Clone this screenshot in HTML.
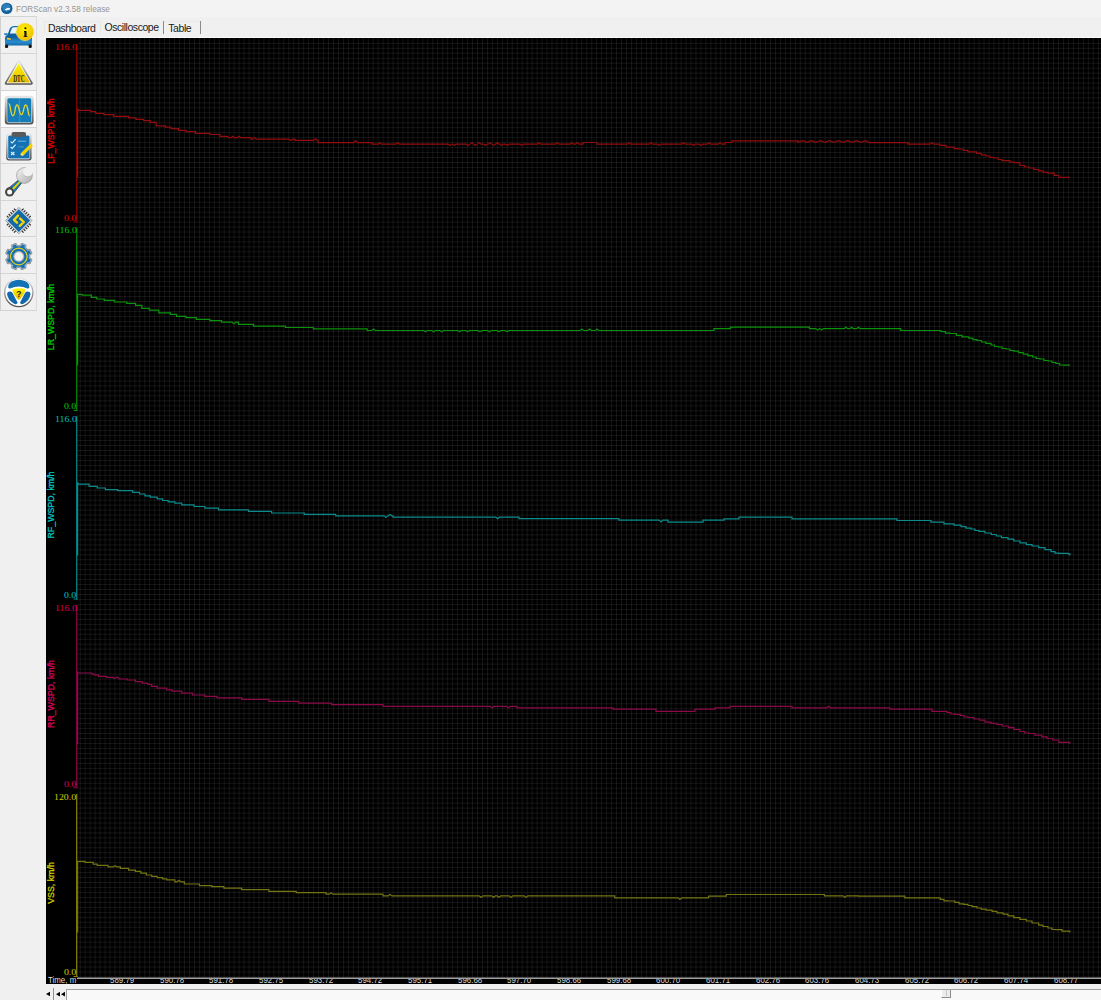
<!DOCTYPE html>
<html><head><meta charset="utf-8">
<style>
*{margin:0;padding:0;box-sizing:border-box}
html,body{width:1101px;height:1000px;overflow:hidden;background:#f0f0f0;font-family:"Liberation Sans",sans-serif;position:relative}
.title{position:absolute;left:0;top:0;width:1101px;height:17px;background:#f3f3f3}
.title .t{position:absolute;left:15.8px;top:3.3px;font-size:9.4px;color:#959595;white-space:nowrap;transform:scaleX(0.87);transform-origin:left top}
.tb{position:absolute;left:1px;width:36px;height:37px;background:#f0f0f0;border-right:1px solid #dcdcdc;border-bottom:1px solid #d4d4d4}
.tb.sel{background:#fcfcfc}
.tb svg{position:absolute;left:-1px;top:0}
.tab{position:absolute;top:21px;height:14px;font-size:10.5px;letter-spacing:-0.45px;color:#1a1a1a;white-space:nowrap;line-height:14px}
.sep{position:absolute;top:20.7px;width:1px;height:13px;background:#8a8a8a}
.plot{position:absolute;left:46px;top:38px;width:1055px;height:946px;background:#000}
.ylab{position:absolute;right:1024.4px;font-family:"Liberation Serif",serif;font-size:9px;line-height:9px;white-space:nowrap;transform:scaleX(1.1);transform-origin:right center}
.chname{position:absolute;left:50.8px;width:0;height:0;font-size:8.8px;line-height:9px;white-space:nowrap;-webkit-text-stroke:0.3px currentColor}
.chname span{position:absolute;left:0;top:0;transform:translate(-50%,-50%) rotate(-90deg)}
.xlab{position:absolute;top:978.6px;height:5.2px;overflow:hidden;font-size:9.2px;line-height:9px;color:#d8d8d8;white-space:nowrap}
.xlab span{display:inline-block;position:relative;top:-3px;transform:scaleX(0.86);transform-origin:left top}
</style></head><body>
<div class="title">
<svg width="14" height="16" style="position:absolute;left:0;top:0">
<circle cx="6.8" cy="8.4" r="5.7" fill="#0f5f98"/>
<circle cx="6.4" cy="7.6" r="4.2" fill="#2a7fb8"/>
<path d="M4.6 9.8 L6.4 8.6 L7.2 7.9 Q8.6 7.6 10 8.2 L10.2 9.4 L7.6 10 L6.2 10.6 Z" fill="#f4f8fb"/>
</svg>
<div class="t">FORScan v2.3.58 release</div>
</div>
<div style="position:absolute;left:0;top:17px;width:1px;height:294px;background:#d0d0d0"></div>
<svg width="0" height="0" style="position:absolute"><defs>
<linearGradient id="gy" x1="0" y1="0" x2="0" y2="1"><stop offset="0" stop-color="#fff700"/><stop offset="1" stop-color="#e8b800"/></linearGradient>
<linearGradient id="gbz" x1="0" y1="0" x2="0" y2="1"><stop offset="0" stop-color="#e8e8e8"/><stop offset="1" stop-color="#505050"/></linearGradient>
<linearGradient id="gbl" x1="0" y1="0" x2="0" y2="1"><stop offset="0" stop-color="#1a78b8"/><stop offset="1" stop-color="#0f5f9c"/></linearGradient>
<radialGradient id="gyb" cx="0.45" cy="0.35" r="0.7"><stop offset="0" stop-color="#fff200"/><stop offset="1" stop-color="#f0b800"/></radialGradient>
<linearGradient id="gcar" x1="0" y1="0" x2="0" y2="1"><stop offset="0" stop-color="#1670b0"/><stop offset="0.55" stop-color="#0e5c9c"/><stop offset="0.8" stop-color="#2a8ccc"/><stop offset="1" stop-color="#136cae"/></linearGradient>
<linearGradient id="gmet" x1="0" y1="0" x2="1" y2="1"><stop offset="0" stop-color="#f4f4f4"/><stop offset="1" stop-color="#b0b0b0"/></linearGradient>
</defs></svg>
<div style="position:absolute;left:0;top:16.4px;width:37px;height:1.2px;background:#d4d4d4"></div>
<div class="tb" style="top:17px;height:36.6px"><svg width="37" height="37" viewBox="0 0 37 37">
<path d="M5 21.2 Q5 18.6 7.6 17.8 L9.8 11.6 Q10.8 9.2 13.8 9 L23 9 Q26 9.2 27.2 11.6 L29.4 17.8 Q32 18.6 32 21.2 L32 26.8 Q32 28.6 30 28.6 L7 28.6 Q5 28.6 5 26.8 Z" fill="url(#gcar)"/>
<path d="M9.9 16.6 L11.8 11.6 Q12.4 10.3 14 10.3 L22 10.3 L22 16.6 Z" fill="#eaf5fb"/>
<path d="M4 16.6 Q4.6 16 7.6 16.2 L8 17.6 L5 18.2 Q4 17.8 4 16.6 Z" fill="#1a75b5"/>
<path d="M6.8 20.6 L10.4 21.2 L11 23 L7 22.6 Z" fill="#f2c020"/>
<rect x="5" y="27.6" width="3.2" height="3.4" rx="1.3" fill="#151515"/>
<rect x="28.6" y="27.6" width="3.2" height="3.4" rx="1.3" fill="#151515"/>
<circle cx="25" cy="14.8" r="8.9" fill="url(#gyb)" stroke="#f6e690" stroke-width="0.5"/>
<circle cx="25.4" cy="11.3" r="1.05" fill="#111"/>
<path d="M24 14 L26.5 14 L26.5 19.2 L27.3 19.2 L27.3 20.1 L23.6 20.1 L23.6 19.2 L24.4 19.2 L24.4 15 L24 15 Z" fill="#111"/>
</svg></div>
<div class="tb" style="top:53.6px;height:37.0px"><svg width="37" height="37" viewBox="0 0 37 37">
<path d="M18.8 6.4 Q19.6 6.4 20.2 7.4 L32.6 28.6 Q33.4 30.6 31.6 30.8 L6 30.8 Q4.2 30.6 5 28.6 L17.4 7.4 Q18 6.4 18.8 6.4 Z" fill="url(#gbz)"/>
<path d="M18.8 8 L31.2 29.2 L6.4 29.2 Z" fill="#fff"/>
<path d="M18.8 9.4 L30 28.6 L7.6 28.6 Z" fill="url(#gy)"/>
<text x="18.9" y="27.8" font-family="Liberation Serif" font-size="11" font-weight="bold" fill="#2c2814" text-anchor="middle" textLength="11.4" lengthAdjust="spacingAndGlyphs">DTC</text>
</svg></div>
<div class="tb sel" style="top:90.6px;height:37.0px"><svg width="37" height="37" viewBox="0 0 37 37">
<rect x="4.8" y="4.8" width="28.8" height="28.8" rx="3" fill="url(#gbz)"/>
<rect x="6.8" y="6.7" width="25" height="25" rx="2" fill="#e8f4fa"/>
<rect x="7.3" y="7.2" width="24" height="24" rx="1.5" fill="#167cb8"/>
<line x1="19.6" y1="7.2" x2="19.6" y2="31.2" stroke="#5cb070" stroke-width="0.6"/>
<path d="M8.6 12.6 C10.6 12.2 10.4 24.8 13 24.8 C15.4 24.8 14.6 14 17 14 C19.4 14 19 23.6 21.4 23.6 C23.8 23.6 23.4 14 25.8 14 C28.2 14 27.8 24.8 29.8 24.8" fill="none" stroke="#e8d82a" stroke-width="1.3"/>
</svg></div>
<div class="tb" style="top:127.6px;height:36.7px"><svg width="37" height="37" viewBox="0 0 37 37">
<rect x="6.2" y="5.6" width="25.4" height="26.8" rx="2.6" fill="url(#gbz)"/>
<rect x="7.6" y="6.8" width="22.4" height="24.4" rx="1.6" fill="#fff"/>
<rect x="8.2" y="7.4" width="21.4" height="23.2" rx="1.4" fill="#1472b4"/>
<rect x="11.6" y="4" width="14.4" height="5" rx="1.8" fill="#5a5a5a"/>
<path d="M10.6 13.6 L12.2 15 L15.6 11.2 M10.6 19 L12.2 20.4 L15.6 16.6 M11 24 L14.4 27 M14.4 24 L11 27" stroke="#e8f4fb" stroke-width="1.1" fill="none"/>
<rect x="18" y="12.6" width="8" height="1.4" fill="#5aa0d0"/>
<rect x="18" y="18.2" width="6" height="1.2" fill="#3d8cc4"/>
<path d="M20.4 28.2 L21 25 L30.8 15.6 L33 17.8 L23.4 27.4 Z" fill="#f2d200"/>
<path d="M20.4 28.2 L21 25 L23.4 27.4 Z" fill="#e6e6e6"/>
<path d="M20.4 28.2 L20.7 26.8 L21.8 27.9 Z" fill="#111"/>
</svg></div>
<div class="tb" style="top:164.3px;height:36.5px"><svg width="37" height="37" viewBox="0 0 37 37">
<path d="M19.4 15.2 L22.4 18.2 L12.6 30.4 L7.2 25.2 Z" fill="#1b78b0" stroke="#3e3e3e" stroke-width="0.7"/>
<path d="M20 16.4 L21.2 17.6 L11.2 28.6 L9.6 27 Z" fill="#f0d400"/>
<circle cx="24.4" cy="11.5" r="7.9" fill="url(#gmet)" stroke="#8a8a8a" stroke-width="0.6"/>
<circle cx="27.8" cy="7.8" r="4.9" fill="#f0f0f0"/>
<path d="M23.4 10.6 A4.9 4.9 0 0 0 31.2 11.4" fill="none" stroke="#a8a8a8" stroke-width="0.6"/>
<circle cx="9.6" cy="27.9" r="4.6" fill="#454545"/>
<circle cx="9.6" cy="27.9" r="2.5" fill="#fafafa"/>
</svg></div>
<div class="tb" style="top:200.8px;height:36.7px"><svg width="37" height="37" viewBox="0 0 37 37">
<g stroke="#2e2e2e" stroke-width="1.2"><line x1="9.20" y1="17.20" x2="6.80" y2="14.80"/><line x1="11.00" y1="15.40" x2="8.60" y2="13.00"/><line x1="12.80" y1="13.60" x2="10.40" y2="11.20"/><line x1="14.60" y1="11.80" x2="12.20" y2="9.40"/><line x1="16.40" y1="10.00" x2="14.00" y2="7.60"/><line x1="21.20" y1="10.00" x2="23.60" y2="7.60"/><line x1="23.00" y1="11.80" x2="25.40" y2="9.40"/><line x1="24.80" y1="13.60" x2="27.20" y2="11.20"/><line x1="26.60" y1="15.40" x2="29.00" y2="13.00"/><line x1="28.40" y1="17.20" x2="30.80" y2="14.80"/><line x1="28.40" y1="22.00" x2="30.80" y2="24.40"/><line x1="26.60" y1="23.80" x2="29.00" y2="26.20"/><line x1="24.80" y1="25.60" x2="27.20" y2="28.00"/><line x1="23.00" y1="27.40" x2="25.40" y2="29.80"/><line x1="21.20" y1="29.20" x2="23.60" y2="31.60"/><line x1="16.40" y1="29.20" x2="14.00" y2="31.60"/><line x1="14.60" y1="27.40" x2="12.20" y2="29.80"/><line x1="12.80" y1="25.60" x2="10.40" y2="28.00"/><line x1="11.00" y1="23.80" x2="8.60" y2="26.20"/><line x1="9.20" y1="22.00" x2="6.80" y2="24.40"/></g>
<path d="M18.8 6.4 L32 19.6 L18.8 32.8 L5.6 19.6 Z" fill="#d8d8d8" stroke="#707070" stroke-width="0.6"/>
<path d="M18.8 7.6 L30.8 19.6 L18.8 31.6 L6.8 19.6 Z" fill="#cfe6f4"/>
<path d="M18.8 8.2 L30.2 19.6 L18.8 31 L7.4 19.6 Z" fill="#1468a8"/>
<path d="M18 14.6 L14 18.8 L17 21.6 M20.2 17.6 L23.8 21 L19.8 24.8" stroke="#f4d800" stroke-width="2.4" fill="none" stroke-linecap="round" stroke-linejoin="round"/>
</svg></div>
<div class="tb" style="top:237.5px;height:36.8px"><svg width="37" height="37" viewBox="0 0 37 37">
<path d="M20.73 8.08 L21.88 6.08 L25.41 7.54 L24.81 9.77 L27.53 12.49 L29.76 11.89 L31.22 15.42 L29.22 16.57 L29.22 20.43 L31.22 21.58 L29.76 25.11 L27.53 24.51 L24.81 27.23 L25.41 29.46 L21.88 30.92 L20.73 28.92 L16.87 28.92 L15.72 30.92 L12.19 29.46 L12.79 27.23 L10.07 24.51 L7.84 25.11 L6.38 21.58 L8.38 20.43 L8.38 16.57 L6.38 15.42 L7.84 11.89 L10.07 12.49 L12.79 9.77 L12.19 7.54 L15.72 6.08 L16.87 8.08 Z" fill="#1a6fb0" stroke="#8c8c8c" stroke-width="2.2" stroke-linejoin="round"/>
<path d="M20.73 8.08 L21.88 6.08 L25.41 7.54 L24.81 9.77 L27.53 12.49 L29.76 11.89 L31.22 15.42 L29.22 16.57 L29.22 20.43 L31.22 21.58 L29.76 25.11 L27.53 24.51 L24.81 27.23 L25.41 29.46 L21.88 30.92 L20.73 28.92 L16.87 28.92 L15.72 30.92 L12.19 29.46 L12.79 27.23 L10.07 24.51 L7.84 25.11 L6.38 21.58 L8.38 20.43 L8.38 16.57 L6.38 15.42 L7.84 11.89 L10.07 12.49 L12.79 9.77 L12.19 7.54 L15.72 6.08 L16.87 8.08 Z" fill="#1a6fb0" stroke="#e8f2fa" stroke-width="0.4"/>
<circle cx="18.8" cy="18.5" r="8.3" fill="none" stroke="#e0d020" stroke-width="1.2"/>
<circle cx="18.8" cy="18.5" r="5.4" fill="#b8b8b8"/>
<circle cx="18.8" cy="18.5" r="4.2" fill="#f4f4f4"/>
</svg></div>
<div class="tb" style="top:274.3px;height:36.7px"><svg width="37" height="37" viewBox="0 0 37 37">
<circle cx="18.8" cy="18.5" r="14.1" fill="#fff" stroke="url(#gbz)" stroke-width="1.3"/>
<path d="M8.2 13.6 Q8 9.6 11.6 7.6 Q18.8 4 26 7.6 Q29.6 9.6 29.4 13.6 Q28.6 14.8 27.4 14.4 Q18.8 10.8 10.2 14.4 Q9 14.8 8.2 13.6 Z" fill="#1472b4"/>
<path d="M7 20 Q7.4 17.6 9.8 17.6 Q11.6 17.6 12.6 19 L17.4 28.2 Q17.6 30.4 15 30.2 Q8 27 7 20 Z" fill="#1268ac"/>
<path d="M30.6 20 Q30.2 17.6 27.8 17.6 Q26 17.6 25 19 L20.2 28.2 Q20 30.4 22.6 30.2 Q29.6 27 30.6 20 Z" fill="#1268ac"/>
<path d="M12.6 15.2 Q18.8 13.4 25 15.2 Q25.6 17.4 23.6 20.6 L20.2 25 Q18.8 26.6 17.4 25 L14 20.6 Q12 17.4 12.6 15.2 Z" fill="url(#gy)"/>
<text x="18.8" y="22.8" font-family="Liberation Sans" font-size="8.5" font-weight="bold" fill="#1a1a1a" text-anchor="middle">?</text>
</svg></div>
<div style="position:absolute;left:43.5px;top:20.5px;width:57px;height:14.5px;border:1px solid #e8e8e8;border-bottom:none;background:#f0f0f0"></div><div style="position:absolute;left:164px;top:20.5px;width:37px;height:14.5px;border-top:1px solid #e8e8e8;background:#f1f1f1"></div><div class="tab" style="left:48px">Dashboard</div>
<div class="tab" style="left:104.5px;top:20.2px">Oscilloscope</div>
<div class="sep" style="left:163px"></div>
<div class="tab" style="left:168.3px">Table</div>
<div class="sep" style="left:200px"></div>
<div style="position:absolute;left:44px;top:37px;width:1057px;height:1px;background:#fafafa"></div>
<div class="plot"></div>
<svg width="1101" height="1000" style="position:absolute;left:0;top:0">
<g fill="#fff" fill-opacity="0.092">
<rect x="79.78" y="38" width="0.85" height="940"/>
<rect x="84.75" y="38" width="0.85" height="940"/>
<rect x="89.71" y="38" width="0.85" height="940"/>
<rect x="94.68" y="38" width="0.85" height="940"/>
<rect x="99.64" y="38" width="0.85" height="940"/>
<rect x="104.61" y="38" width="0.85" height="940"/>
<rect x="109.58" y="38" width="0.85" height="940"/>
<rect x="114.54" y="38" width="0.85" height="940"/>
<rect x="119.51" y="38" width="0.85" height="940"/>
<rect x="124.47" y="38" width="0.85" height="940"/>
<rect x="129.44" y="38" width="0.85" height="940"/>
<rect x="134.41" y="38" width="0.85" height="940"/>
<rect x="139.37" y="38" width="0.85" height="940"/>
<rect x="144.34" y="38" width="0.85" height="940"/>
<rect x="149.30" y="38" width="0.85" height="940"/>
<rect x="154.27" y="38" width="0.85" height="940"/>
<rect x="159.24" y="38" width="0.85" height="940"/>
<rect x="164.20" y="38" width="0.85" height="940"/>
<rect x="169.17" y="38" width="0.85" height="940"/>
<rect x="174.13" y="38" width="0.85" height="940"/>
<rect x="179.10" y="38" width="0.85" height="940"/>
<rect x="184.07" y="38" width="0.85" height="940"/>
<rect x="189.03" y="38" width="0.85" height="940"/>
<rect x="194.00" y="38" width="0.85" height="940"/>
<rect x="198.96" y="38" width="0.85" height="940"/>
<rect x="203.93" y="38" width="0.85" height="940"/>
<rect x="208.90" y="38" width="0.85" height="940"/>
<rect x="213.86" y="38" width="0.85" height="940"/>
<rect x="218.83" y="38" width="0.85" height="940"/>
<rect x="223.79" y="38" width="0.85" height="940"/>
<rect x="228.76" y="38" width="0.85" height="940"/>
<rect x="233.73" y="38" width="0.85" height="940"/>
<rect x="238.69" y="38" width="0.85" height="940"/>
<rect x="243.66" y="38" width="0.85" height="940"/>
<rect x="248.62" y="38" width="0.85" height="940"/>
<rect x="253.59" y="38" width="0.85" height="940"/>
<rect x="258.56" y="38" width="0.85" height="940"/>
<rect x="263.52" y="38" width="0.85" height="940"/>
<rect x="268.49" y="38" width="0.85" height="940"/>
<rect x="273.45" y="38" width="0.85" height="940"/>
<rect x="278.42" y="38" width="0.85" height="940"/>
<rect x="283.39" y="38" width="0.85" height="940"/>
<rect x="288.35" y="38" width="0.85" height="940"/>
<rect x="293.32" y="38" width="0.85" height="940"/>
<rect x="298.28" y="38" width="0.85" height="940"/>
<rect x="303.25" y="38" width="0.85" height="940"/>
<rect x="308.22" y="38" width="0.85" height="940"/>
<rect x="313.18" y="38" width="0.85" height="940"/>
<rect x="318.15" y="38" width="0.85" height="940"/>
<rect x="323.11" y="38" width="0.85" height="940"/>
<rect x="328.08" y="38" width="0.85" height="940"/>
<rect x="333.05" y="38" width="0.85" height="940"/>
<rect x="338.01" y="38" width="0.85" height="940"/>
<rect x="342.98" y="38" width="0.85" height="940"/>
<rect x="347.94" y="38" width="0.85" height="940"/>
<rect x="352.91" y="38" width="0.85" height="940"/>
<rect x="357.88" y="38" width="0.85" height="940"/>
<rect x="362.84" y="38" width="0.85" height="940"/>
<rect x="367.81" y="38" width="0.85" height="940"/>
<rect x="372.77" y="38" width="0.85" height="940"/>
<rect x="377.74" y="38" width="0.85" height="940"/>
<rect x="382.71" y="38" width="0.85" height="940"/>
<rect x="387.67" y="38" width="0.85" height="940"/>
<rect x="392.64" y="38" width="0.85" height="940"/>
<rect x="397.60" y="38" width="0.85" height="940"/>
<rect x="402.57" y="38" width="0.85" height="940"/>
<rect x="407.54" y="38" width="0.85" height="940"/>
<rect x="412.50" y="38" width="0.85" height="940"/>
<rect x="417.47" y="38" width="0.85" height="940"/>
<rect x="422.43" y="38" width="0.85" height="940"/>
<rect x="427.40" y="38" width="0.85" height="940"/>
<rect x="432.37" y="38" width="0.85" height="940"/>
<rect x="437.33" y="38" width="0.85" height="940"/>
<rect x="442.30" y="38" width="0.85" height="940"/>
<rect x="447.26" y="38" width="0.85" height="940"/>
<rect x="452.23" y="38" width="0.85" height="940"/>
<rect x="457.20" y="38" width="0.85" height="940"/>
<rect x="462.16" y="38" width="0.85" height="940"/>
<rect x="467.13" y="38" width="0.85" height="940"/>
<rect x="472.09" y="38" width="0.85" height="940"/>
<rect x="477.06" y="38" width="0.85" height="940"/>
<rect x="482.03" y="38" width="0.85" height="940"/>
<rect x="486.99" y="38" width="0.85" height="940"/>
<rect x="491.96" y="38" width="0.85" height="940"/>
<rect x="496.92" y="38" width="0.85" height="940"/>
<rect x="501.89" y="38" width="0.85" height="940"/>
<rect x="506.86" y="38" width="0.85" height="940"/>
<rect x="511.82" y="38" width="0.85" height="940"/>
<rect x="516.79" y="38" width="0.85" height="940"/>
<rect x="521.75" y="38" width="0.85" height="940"/>
<rect x="526.72" y="38" width="0.85" height="940"/>
<rect x="531.69" y="38" width="0.85" height="940"/>
<rect x="536.65" y="38" width="0.85" height="940"/>
<rect x="541.62" y="38" width="0.85" height="940"/>
<rect x="546.58" y="38" width="0.85" height="940"/>
<rect x="551.55" y="38" width="0.85" height="940"/>
<rect x="556.52" y="38" width="0.85" height="940"/>
<rect x="561.48" y="38" width="0.85" height="940"/>
<rect x="566.45" y="38" width="0.85" height="940"/>
<rect x="571.41" y="38" width="0.85" height="940"/>
<rect x="576.38" y="38" width="0.85" height="940"/>
<rect x="581.35" y="38" width="0.85" height="940"/>
<rect x="586.31" y="38" width="0.85" height="940"/>
<rect x="591.28" y="38" width="0.85" height="940"/>
<rect x="596.24" y="38" width="0.85" height="940"/>
<rect x="601.21" y="38" width="0.85" height="940"/>
<rect x="606.18" y="38" width="0.85" height="940"/>
<rect x="611.14" y="38" width="0.85" height="940"/>
<rect x="616.11" y="38" width="0.85" height="940"/>
<rect x="621.07" y="38" width="0.85" height="940"/>
<rect x="626.04" y="38" width="0.85" height="940"/>
<rect x="631.01" y="38" width="0.85" height="940"/>
<rect x="635.97" y="38" width="0.85" height="940"/>
<rect x="640.94" y="38" width="0.85" height="940"/>
<rect x="645.90" y="38" width="0.85" height="940"/>
<rect x="650.87" y="38" width="0.85" height="940"/>
<rect x="655.84" y="38" width="0.85" height="940"/>
<rect x="660.80" y="38" width="0.85" height="940"/>
<rect x="665.77" y="38" width="0.85" height="940"/>
<rect x="670.73" y="38" width="0.85" height="940"/>
<rect x="675.70" y="38" width="0.85" height="940"/>
<rect x="680.67" y="38" width="0.85" height="940"/>
<rect x="685.63" y="38" width="0.85" height="940"/>
<rect x="690.60" y="38" width="0.85" height="940"/>
<rect x="695.56" y="38" width="0.85" height="940"/>
<rect x="700.53" y="38" width="0.85" height="940"/>
<rect x="705.50" y="38" width="0.85" height="940"/>
<rect x="710.46" y="38" width="0.85" height="940"/>
<rect x="715.43" y="38" width="0.85" height="940"/>
<rect x="720.39" y="38" width="0.85" height="940"/>
<rect x="725.36" y="38" width="0.85" height="940"/>
<rect x="730.33" y="38" width="0.85" height="940"/>
<rect x="735.29" y="38" width="0.85" height="940"/>
<rect x="740.26" y="38" width="0.85" height="940"/>
<rect x="745.22" y="38" width="0.85" height="940"/>
<rect x="750.19" y="38" width="0.85" height="940"/>
<rect x="755.16" y="38" width="0.85" height="940"/>
<rect x="760.12" y="38" width="0.85" height="940"/>
<rect x="765.09" y="38" width="0.85" height="940"/>
<rect x="770.05" y="38" width="0.85" height="940"/>
<rect x="775.02" y="38" width="0.85" height="940"/>
<rect x="779.99" y="38" width="0.85" height="940"/>
<rect x="784.95" y="38" width="0.85" height="940"/>
<rect x="789.92" y="38" width="0.85" height="940"/>
<rect x="794.88" y="38" width="0.85" height="940"/>
<rect x="799.85" y="38" width="0.85" height="940"/>
<rect x="804.82" y="38" width="0.85" height="940"/>
<rect x="809.78" y="38" width="0.85" height="940"/>
<rect x="814.75" y="38" width="0.85" height="940"/>
<rect x="819.71" y="38" width="0.85" height="940"/>
<rect x="824.68" y="38" width="0.85" height="940"/>
<rect x="829.65" y="38" width="0.85" height="940"/>
<rect x="834.61" y="38" width="0.85" height="940"/>
<rect x="839.58" y="38" width="0.85" height="940"/>
<rect x="844.54" y="38" width="0.85" height="940"/>
<rect x="849.51" y="38" width="0.85" height="940"/>
<rect x="854.48" y="38" width="0.85" height="940"/>
<rect x="859.44" y="38" width="0.85" height="940"/>
<rect x="864.41" y="38" width="0.85" height="940"/>
<rect x="869.37" y="38" width="0.85" height="940"/>
<rect x="874.34" y="38" width="0.85" height="940"/>
<rect x="879.31" y="38" width="0.85" height="940"/>
<rect x="884.27" y="38" width="0.85" height="940"/>
<rect x="889.24" y="38" width="0.85" height="940"/>
<rect x="894.20" y="38" width="0.85" height="940"/>
<rect x="899.17" y="38" width="0.85" height="940"/>
<rect x="904.14" y="38" width="0.85" height="940"/>
<rect x="909.10" y="38" width="0.85" height="940"/>
<rect x="914.07" y="38" width="0.85" height="940"/>
<rect x="919.03" y="38" width="0.85" height="940"/>
<rect x="924.00" y="38" width="0.85" height="940"/>
<rect x="928.97" y="38" width="0.85" height="940"/>
<rect x="933.93" y="38" width="0.85" height="940"/>
<rect x="938.90" y="38" width="0.85" height="940"/>
<rect x="943.86" y="38" width="0.85" height="940"/>
<rect x="948.83" y="38" width="0.85" height="940"/>
<rect x="953.80" y="38" width="0.85" height="940"/>
<rect x="958.76" y="38" width="0.85" height="940"/>
<rect x="963.73" y="38" width="0.85" height="940"/>
<rect x="968.69" y="38" width="0.85" height="940"/>
<rect x="973.66" y="38" width="0.85" height="940"/>
<rect x="978.63" y="38" width="0.85" height="940"/>
<rect x="983.59" y="38" width="0.85" height="940"/>
<rect x="988.56" y="38" width="0.85" height="940"/>
<rect x="993.52" y="38" width="0.85" height="940"/>
<rect x="998.49" y="38" width="0.85" height="940"/>
<rect x="1003.46" y="38" width="0.85" height="940"/>
<rect x="1008.42" y="38" width="0.85" height="940"/>
<rect x="1013.39" y="38" width="0.85" height="940"/>
<rect x="1018.35" y="38" width="0.85" height="940"/>
<rect x="1023.32" y="38" width="0.85" height="940"/>
<rect x="1028.29" y="38" width="0.85" height="940"/>
<rect x="1033.25" y="38" width="0.85" height="940"/>
<rect x="1038.22" y="38" width="0.85" height="940"/>
<rect x="1043.18" y="38" width="0.85" height="940"/>
<rect x="1048.15" y="38" width="0.85" height="940"/>
<rect x="1053.12" y="38" width="0.85" height="940"/>
<rect x="1058.08" y="38" width="0.85" height="940"/>
<rect x="1063.05" y="38" width="0.85" height="940"/>
<rect x="1068.01" y="38" width="0.85" height="940"/>
<rect x="1072.98" y="38" width="0.85" height="940"/>
<rect x="1077.95" y="38" width="0.85" height="940"/>
<rect x="1082.91" y="38" width="0.85" height="940"/>
<rect x="1087.88" y="38" width="0.85" height="940"/>
<rect x="1092.84" y="38" width="0.85" height="940"/>
<rect x="1097.81" y="38" width="0.85" height="940"/>
<rect x="77" y="42.88" width="1030" height="0.85"/>
<rect x="77" y="47.85" width="1030" height="0.85"/>
<rect x="77" y="52.81" width="1030" height="0.85"/>
<rect x="77" y="57.78" width="1030" height="0.85"/>
<rect x="77" y="62.74" width="1030" height="0.85"/>
<rect x="77" y="67.71" width="1030" height="0.85"/>
<rect x="77" y="72.68" width="1030" height="0.85"/>
<rect x="77" y="77.64" width="1030" height="0.85"/>
<rect x="77" y="82.61" width="1030" height="0.85"/>
<rect x="77" y="87.57" width="1030" height="0.85"/>
<rect x="77" y="92.54" width="1030" height="0.85"/>
<rect x="77" y="97.51" width="1030" height="0.85"/>
<rect x="77" y="102.47" width="1030" height="0.85"/>
<rect x="77" y="107.44" width="1030" height="0.85"/>
<rect x="77" y="112.40" width="1030" height="0.85"/>
<rect x="77" y="117.37" width="1030" height="0.85"/>
<rect x="77" y="122.34" width="1030" height="0.85"/>
<rect x="77" y="127.30" width="1030" height="0.85"/>
<rect x="77" y="132.27" width="1030" height="0.85"/>
<rect x="77" y="137.23" width="1030" height="0.85"/>
<rect x="77" y="142.20" width="1030" height="0.85"/>
<rect x="77" y="147.17" width="1030" height="0.85"/>
<rect x="77" y="152.13" width="1030" height="0.85"/>
<rect x="77" y="157.10" width="1030" height="0.85"/>
<rect x="77" y="162.06" width="1030" height="0.85"/>
<rect x="77" y="167.03" width="1030" height="0.85"/>
<rect x="77" y="172.00" width="1030" height="0.85"/>
<rect x="77" y="176.96" width="1030" height="0.85"/>
<rect x="77" y="181.93" width="1030" height="0.85"/>
<rect x="77" y="186.89" width="1030" height="0.85"/>
<rect x="77" y="191.86" width="1030" height="0.85"/>
<rect x="77" y="196.83" width="1030" height="0.85"/>
<rect x="77" y="201.79" width="1030" height="0.85"/>
<rect x="77" y="206.76" width="1030" height="0.85"/>
<rect x="77" y="211.72" width="1030" height="0.85"/>
<rect x="77" y="216.69" width="1030" height="0.85"/>
<rect x="77" y="221.66" width="1030" height="0.85"/>
<rect x="77" y="226.62" width="1030" height="0.85"/>
<rect x="77" y="231.59" width="1030" height="0.85"/>
<rect x="77" y="236.55" width="1030" height="0.85"/>
<rect x="77" y="241.52" width="1030" height="0.85"/>
<rect x="77" y="246.49" width="1030" height="0.85"/>
<rect x="77" y="251.45" width="1030" height="0.85"/>
<rect x="77" y="256.42" width="1030" height="0.85"/>
<rect x="77" y="261.38" width="1030" height="0.85"/>
<rect x="77" y="266.35" width="1030" height="0.85"/>
<rect x="77" y="271.32" width="1030" height="0.85"/>
<rect x="77" y="276.28" width="1030" height="0.85"/>
<rect x="77" y="281.25" width="1030" height="0.85"/>
<rect x="77" y="286.21" width="1030" height="0.85"/>
<rect x="77" y="291.18" width="1030" height="0.85"/>
<rect x="77" y="296.15" width="1030" height="0.85"/>
<rect x="77" y="301.11" width="1030" height="0.85"/>
<rect x="77" y="306.08" width="1030" height="0.85"/>
<rect x="77" y="311.04" width="1030" height="0.85"/>
<rect x="77" y="316.01" width="1030" height="0.85"/>
<rect x="77" y="320.98" width="1030" height="0.85"/>
<rect x="77" y="325.94" width="1030" height="0.85"/>
<rect x="77" y="330.91" width="1030" height="0.85"/>
<rect x="77" y="335.87" width="1030" height="0.85"/>
<rect x="77" y="340.84" width="1030" height="0.85"/>
<rect x="77" y="345.81" width="1030" height="0.85"/>
<rect x="77" y="350.77" width="1030" height="0.85"/>
<rect x="77" y="355.74" width="1030" height="0.85"/>
<rect x="77" y="360.70" width="1030" height="0.85"/>
<rect x="77" y="365.67" width="1030" height="0.85"/>
<rect x="77" y="370.64" width="1030" height="0.85"/>
<rect x="77" y="375.60" width="1030" height="0.85"/>
<rect x="77" y="380.57" width="1030" height="0.85"/>
<rect x="77" y="385.53" width="1030" height="0.85"/>
<rect x="77" y="390.50" width="1030" height="0.85"/>
<rect x="77" y="395.47" width="1030" height="0.85"/>
<rect x="77" y="400.43" width="1030" height="0.85"/>
<rect x="77" y="405.40" width="1030" height="0.85"/>
<rect x="77" y="410.36" width="1030" height="0.85"/>
<rect x="77" y="415.33" width="1030" height="0.85"/>
<rect x="77" y="420.30" width="1030" height="0.85"/>
<rect x="77" y="425.26" width="1030" height="0.85"/>
<rect x="77" y="430.23" width="1030" height="0.85"/>
<rect x="77" y="435.19" width="1030" height="0.85"/>
<rect x="77" y="440.16" width="1030" height="0.85"/>
<rect x="77" y="445.13" width="1030" height="0.85"/>
<rect x="77" y="450.09" width="1030" height="0.85"/>
<rect x="77" y="455.06" width="1030" height="0.85"/>
<rect x="77" y="460.02" width="1030" height="0.85"/>
<rect x="77" y="464.99" width="1030" height="0.85"/>
<rect x="77" y="469.96" width="1030" height="0.85"/>
<rect x="77" y="474.92" width="1030" height="0.85"/>
<rect x="77" y="479.89" width="1030" height="0.85"/>
<rect x="77" y="484.85" width="1030" height="0.85"/>
<rect x="77" y="489.82" width="1030" height="0.85"/>
<rect x="77" y="494.79" width="1030" height="0.85"/>
<rect x="77" y="499.75" width="1030" height="0.85"/>
<rect x="77" y="504.72" width="1030" height="0.85"/>
<rect x="77" y="509.68" width="1030" height="0.85"/>
<rect x="77" y="514.65" width="1030" height="0.85"/>
<rect x="77" y="519.62" width="1030" height="0.85"/>
<rect x="77" y="524.58" width="1030" height="0.85"/>
<rect x="77" y="529.55" width="1030" height="0.85"/>
<rect x="77" y="534.51" width="1030" height="0.85"/>
<rect x="77" y="539.48" width="1030" height="0.85"/>
<rect x="77" y="544.45" width="1030" height="0.85"/>
<rect x="77" y="549.41" width="1030" height="0.85"/>
<rect x="77" y="554.38" width="1030" height="0.85"/>
<rect x="77" y="559.34" width="1030" height="0.85"/>
<rect x="77" y="564.31" width="1030" height="0.85"/>
<rect x="77" y="569.28" width="1030" height="0.85"/>
<rect x="77" y="574.24" width="1030" height="0.85"/>
<rect x="77" y="579.21" width="1030" height="0.85"/>
<rect x="77" y="584.17" width="1030" height="0.85"/>
<rect x="77" y="589.14" width="1030" height="0.85"/>
<rect x="77" y="594.11" width="1030" height="0.85"/>
<rect x="77" y="599.07" width="1030" height="0.85"/>
<rect x="77" y="604.04" width="1030" height="0.85"/>
<rect x="77" y="609.00" width="1030" height="0.85"/>
<rect x="77" y="613.97" width="1030" height="0.85"/>
<rect x="77" y="618.94" width="1030" height="0.85"/>
<rect x="77" y="623.90" width="1030" height="0.85"/>
<rect x="77" y="628.87" width="1030" height="0.85"/>
<rect x="77" y="633.83" width="1030" height="0.85"/>
<rect x="77" y="638.80" width="1030" height="0.85"/>
<rect x="77" y="643.77" width="1030" height="0.85"/>
<rect x="77" y="648.73" width="1030" height="0.85"/>
<rect x="77" y="653.70" width="1030" height="0.85"/>
<rect x="77" y="658.66" width="1030" height="0.85"/>
<rect x="77" y="663.63" width="1030" height="0.85"/>
<rect x="77" y="668.60" width="1030" height="0.85"/>
<rect x="77" y="673.56" width="1030" height="0.85"/>
<rect x="77" y="678.53" width="1030" height="0.85"/>
<rect x="77" y="683.49" width="1030" height="0.85"/>
<rect x="77" y="688.46" width="1030" height="0.85"/>
<rect x="77" y="693.43" width="1030" height="0.85"/>
<rect x="77" y="698.39" width="1030" height="0.85"/>
<rect x="77" y="703.36" width="1030" height="0.85"/>
<rect x="77" y="708.32" width="1030" height="0.85"/>
<rect x="77" y="713.29" width="1030" height="0.85"/>
<rect x="77" y="718.26" width="1030" height="0.85"/>
<rect x="77" y="723.22" width="1030" height="0.85"/>
<rect x="77" y="728.19" width="1030" height="0.85"/>
<rect x="77" y="733.15" width="1030" height="0.85"/>
<rect x="77" y="738.12" width="1030" height="0.85"/>
<rect x="77" y="743.09" width="1030" height="0.85"/>
<rect x="77" y="748.05" width="1030" height="0.85"/>
<rect x="77" y="753.02" width="1030" height="0.85"/>
<rect x="77" y="757.98" width="1030" height="0.85"/>
<rect x="77" y="762.95" width="1030" height="0.85"/>
<rect x="77" y="767.92" width="1030" height="0.85"/>
<rect x="77" y="772.88" width="1030" height="0.85"/>
<rect x="77" y="777.85" width="1030" height="0.85"/>
<rect x="77" y="782.81" width="1030" height="0.85"/>
<rect x="77" y="787.78" width="1030" height="0.85"/>
<rect x="77" y="792.75" width="1030" height="0.85"/>
<rect x="77" y="797.71" width="1030" height="0.85"/>
<rect x="77" y="802.68" width="1030" height="0.85"/>
<rect x="77" y="807.64" width="1030" height="0.85"/>
<rect x="77" y="812.61" width="1030" height="0.85"/>
<rect x="77" y="817.58" width="1030" height="0.85"/>
<rect x="77" y="822.54" width="1030" height="0.85"/>
<rect x="77" y="827.51" width="1030" height="0.85"/>
<rect x="77" y="832.47" width="1030" height="0.85"/>
<rect x="77" y="837.44" width="1030" height="0.85"/>
<rect x="77" y="842.41" width="1030" height="0.85"/>
<rect x="77" y="847.37" width="1030" height="0.85"/>
<rect x="77" y="852.34" width="1030" height="0.85"/>
<rect x="77" y="857.30" width="1030" height="0.85"/>
<rect x="77" y="862.27" width="1030" height="0.85"/>
<rect x="77" y="867.24" width="1030" height="0.85"/>
<rect x="77" y="872.20" width="1030" height="0.85"/>
<rect x="77" y="877.17" width="1030" height="0.85"/>
<rect x="77" y="882.13" width="1030" height="0.85"/>
<rect x="77" y="887.10" width="1030" height="0.85"/>
<rect x="77" y="892.07" width="1030" height="0.85"/>
<rect x="77" y="897.03" width="1030" height="0.85"/>
<rect x="77" y="902.00" width="1030" height="0.85"/>
<rect x="77" y="906.96" width="1030" height="0.85"/>
<rect x="77" y="911.93" width="1030" height="0.85"/>
<rect x="77" y="916.90" width="1030" height="0.85"/>
<rect x="77" y="921.86" width="1030" height="0.85"/>
<rect x="77" y="926.83" width="1030" height="0.85"/>
<rect x="77" y="931.79" width="1030" height="0.85"/>
<rect x="77" y="936.76" width="1030" height="0.85"/>
<rect x="77" y="941.73" width="1030" height="0.85"/>
<rect x="77" y="946.69" width="1030" height="0.85"/>
<rect x="77" y="951.66" width="1030" height="0.85"/>
<rect x="77" y="956.62" width="1030" height="0.85"/>
<rect x="77" y="961.59" width="1030" height="0.85"/>
<rect x="77" y="966.56" width="1030" height="0.85"/>
<rect x="77" y="971.52" width="1030" height="0.85"/>
<rect x="77" y="976.49" width="1030" height="0.85"/>
</g>
<rect x="77" y="977.6" width="1024" height="1.2" fill="#c8c8c8"/>
<rect x="76.1" y="44.2" width="1.2" height="178.3" fill="#900000"/>
<rect x="73.5" y="221.5" width="4" height="1" fill="#900000"/>
<rect x="76.1" y="227.5" width="1.2" height="183.5" fill="#008a00"/>
<rect x="73.5" y="410.0" width="4" height="1" fill="#008a00"/>
<rect x="76.1" y="416.2" width="1.2" height="183.4" fill="#008a8a"/>
<rect x="73.5" y="598.6" width="4" height="1" fill="#008a8a"/>
<rect x="76.1" y="605.0" width="1.2" height="183.2" fill="#900048"/>
<rect x="73.5" y="787.2" width="4" height="1" fill="#900048"/>
<rect x="76.1" y="794.0" width="1.2" height="183.0" fill="#8a8400"/>
<rect x="73.5" y="976.0" width="4" height="1" fill="#8a8400"/>
<polyline points="77.6,177.3 77.6,108.7 78.5,110.4 90.8,110.4 90.8,111.7 95.7,111.7 95.7,113.3 103.9,113.3 103.9,114.7 113.7,114.7 113.7,116.3 128.4,116.3 128.4,117.8 136.0,117.8 136.0,119.4 143.7,119.4 143.7,120.7 150.2,120.7 150.2,122.3 156.2,122.3 156.2,125.8 165.5,125.8 165.5,127.2 171.0,127.2 171.0,128.7 178.5,128.7 178.5,130.3 186.0,130.3 186.0,131.7 195.4,131.7 195.4,133.3 210.0,133.3 210.0,134.5 220.0,134.5 220.0,136.3 228.0,136.3 228.0,137.7 230.9,137.7 232.7,136.2 234.5,137.7 237.2,137.7 239.0,136.2 240.8,137.7 251.0,137.7 251.0,139.2 252.7,139.2 254.5,137.4 256.3,139.2 289.2,139.2 291.0,140.5 292.8,139.2 295.0,139.2 295.0,140.4 313.7,140.4 315.5,138.6 317.3,140.4 318.0,140.4 318.0,142.6 353.7,142.6 355.5,140.6 357.3,142.6 372.0,142.6 372.0,144.1 378.2,144.1 380.0,142.5 381.8,144.1 395.8,144.1 397.6,142.5 399.4,144.1 448.2,144.1 450.0,145.5 451.8,144.1 452.7,144.1 454.5,145.5 456.3,144.1 466.4,144.1 468.2,145.5 470.0,144.1 470.0,144.1 471.8,142.5 473.6,144.1 473.7,144.1 475.5,145.5 477.3,144.1 477.3,144.1 479.1,142.5 480.9,144.1 483.7,144.1 485.5,145.5 487.3,144.1 488.2,144.1 490.0,142.5 491.8,144.1 491.8,144.1 493.6,145.5 495.4,144.1 495.5,144.1 497.3,142.5 499.1,144.1 499.5,144.1 501.3,145.5 503.1,144.1 505.5,144.1 507.3,145.5 509.1,144.1 520.0,144.1 521.8,145.5 523.6,144.1 537.3,144.1 539.1,142.5 540.9,144.1 555.5,144.1 557.3,142.5 559.1,144.1 570.0,144.1 571.8,142.5 573.6,144.1 575.5,144.1 577.3,142.5 579.1,144.1 583.0,144.1 583.0,142.5 597.0,142.5 597.0,144.1 627.3,144.1 629.1,142.5 630.9,144.1 649.1,144.1 650.9,142.5 652.7,144.1 657.3,144.1 659.1,145.5 660.9,144.1 681.8,144.1 683.6,142.5 685.4,144.1 691.8,144.1 693.6,145.5 695.4,144.1 699.1,144.1 700.9,145.5 702.7,144.1 707.3,144.1 709.1,142.5 710.9,144.1 718.2,144.1 720.0,142.5 721.8,144.1 725.0,144.1 725.0,142.5 732.0,142.5 732.0,140.9 798.0,140.9 798.0,140.9 798.0,142.4 802.5,140.7 807.0,142.4 811.5,140.7 816.0,142.4 820.5,140.7 825.0,142.4 829.5,140.7 834.0,142.4 838.5,140.7 843.0,142.4 847.5,140.7 852.0,142.4 856.5,140.7 861.0,142.4 865.5,140.7 869.0,142.6 908.0,142.6 908.0,144.1 930.0,144.1 931.8,142.6 933.6,144.1 940.0,144.1 940.0,145.3 946.0,145.3 946.0,147.1 954.0,147.1 954.0,148.6 958.0,148.6 958.0,149.0 963.4,149.0 963.4,150.4 967.8,150.4 967.8,151.9 976.6,151.9 976.6,153.3 981.2,153.3 981.2,154.8 985.9,154.8 985.9,156.0 990.1,156.0 990.1,157.5 994.4,157.5 994.4,158.0 998.2,158.0 998.2,159.5 1002.0,159.5 1002.0,160.6 1009.9,160.6 1009.9,162.1 1013.8,162.1 1013.8,162.7 1020.0,162.7 1020.0,165.5 1024.7,165.5 1024.7,167.0 1029.4,167.0 1029.4,168.0 1034.1,168.0 1034.1,169.5 1038.7,169.5 1038.7,170.8 1043.3,170.8 1043.3,172.3 1048.0,172.3 1048.0,173.2 1054.2,173.2 1054.2,175.4 1058.9,175.4 1058.9,177.4 1070.0,177.4 1070.0,177.4" fill="none" stroke="#940c0c" stroke-width="1.2" stroke-linejoin="miter"/>
<polyline points="77.6,365.2 77.6,294.3 78.0,294.3 82.0,294.3 82.0,295.2 91.3,295.2 91.3,297.3 96.8,297.3 96.8,299.0 104.3,299.0 104.3,300.4 114.5,300.4 114.5,302.0 126.8,302.0 126.8,303.4 135.6,303.4 135.6,305.4 141.8,305.4 141.8,308.4 149.3,308.4 149.3,310.2 158.8,310.2 158.8,312.9 170.4,312.9 170.4,314.3 176.5,314.3 176.5,316.3 186.0,316.3 186.0,317.7 196.3,317.7 196.3,319.3 209.9,319.3 209.9,320.7 221.5,320.7 221.5,322.2 232.2,322.2 234.0,324.0 235.8,322.2 238.4,322.2 238.4,324.3 253.4,324.3 253.4,326.1 285.4,326.1 285.4,327.5 313.3,327.5 313.3,328.8 367.1,328.8 367.1,330.5 371.8,330.5 373.6,329.0 375.4,330.5 423.6,330.5 425.4,331.8 427.2,330.5 431.8,330.5 433.6,331.8 435.4,330.5 439.9,330.5 441.7,331.8 443.5,330.5 457.7,330.5 459.5,331.8 461.3,330.5 465.8,330.5 467.6,331.8 469.4,330.5 478.1,330.5 479.9,331.8 481.7,330.5 487.6,330.5 489.4,331.8 491.2,330.5 497.2,330.5 499.0,331.8 500.8,330.5 505.3,330.5 507.1,331.8 508.9,330.5 580.2,330.5 582.0,329.0 583.8,330.5 587.9,330.5 589.7,329.0 591.5,330.5 595.2,330.5 597.0,329.0 598.8,330.5 714.0,330.5 714.0,328.6 730.4,328.6 730.4,327.2 809.4,327.2 809.4,328.6 815.8,328.6 817.6,329.9 819.4,328.6 819.9,328.6 821.7,329.9 823.5,328.6 844.2,328.6 846.0,327.2 847.8,328.6 849.8,328.6 851.6,327.2 853.4,328.6 856.6,328.6 858.4,327.2 860.2,328.6 900.7,328.6 900.7,330.5 940.9,330.5 940.9,331.6 945.5,331.6 945.5,333.1 950.2,333.1 950.2,333.5 956.4,333.5 956.4,335.4 962.0,335.4 962.0,336.8 968.8,336.8 968.8,338.2 972.9,338.2 972.9,339.7 977.0,339.7 977.0,340.5 981.5,340.5 981.5,342.0 985.9,342.0 985.9,343.3 991.0,343.3 991.0,345.0 994.6,345.0 994.6,346.5 998.3,346.5 998.3,347.0 1002.1,347.0 1002.1,348.5 1006.0,348.5 1006.0,349.0 1009.9,349.0 1009.9,350.5 1013.8,350.5 1013.8,351.1 1018.5,351.1 1018.5,352.6 1023.2,352.6 1023.2,354.2 1027.8,354.2 1027.8,355.7 1032.5,355.7 1032.5,357.0 1036.2,357.0 1036.2,358.5 1040.0,358.5 1040.0,359.0 1044.0,359.0 1044.0,360.5 1048.0,360.5 1048.0,361.0 1051.9,361.0 1051.9,362.5 1055.8,362.5 1055.8,363.5 1059.7,363.5 1059.7,365.0 1063.5,365.0 1063.5,365.2 1070.0,365.2 1070.0,365.2" fill="none" stroke="#0a920a" stroke-width="1.2" stroke-linejoin="miter"/>
<polyline points="77.6,555.5 77.6,482.3 78.2,484.2 89.1,484.2 89.1,486.3 97.2,486.3 97.2,488.0 105.4,488.0 105.4,489.6 117.7,489.6 117.7,490.7 132.7,490.7 132.7,492.3 139.5,492.3 139.5,494.0 144.9,494.0 144.9,495.9 150.4,495.9 150.4,497.2 157.2,497.2 157.2,498.9 162.6,498.9 162.6,500.5 168.1,500.5 168.1,501.9 174.9,501.9 174.9,503.2 181.7,503.2 181.7,504.9 194.0,504.9 194.0,506.5 204.9,506.5 204.9,508.1 218.5,508.1 218.5,509.8 248.5,509.8 248.5,511.4 271.6,511.4 271.6,513.0 304.3,513.0 304.3,514.4 335.7,514.4 335.7,515.8 384.1,515.8 385.9,517.4 387.7,515.8 388.2,515.8 390.0,514.4 391.8,515.8 393.0,515.8 393.0,517.2 495.8,517.2 497.6,518.8 499.4,517.2 519.0,517.2 519.0,518.6 619.0,518.6 619.0,520.2 659.2,520.2 661.0,522.0 662.8,520.2 668.0,520.2 668.0,522.2 703.0,522.2 703.0,520.2 724.0,520.2 724.0,518.9 739.0,518.9 739.0,517.2 792.0,517.2 792.0,518.9 897.0,518.9 897.0,520.5 931.0,520.5 931.0,522.2 944.0,522.2 944.0,523.9 954.0,523.9 954.0,525.2 961.0,525.2 961.0,526.7 966.0,526.7 966.0,528.2 971.0,528.2 971.0,529.0 975.0,529.0 975.0,530.5 979.0,530.5 979.0,531.4 985.0,531.4 985.0,533.0 991.3,533.0 991.3,534.5 996.3,534.5 996.3,536.0 1001.4,536.0 1001.4,537.6 1008.0,537.6 1008.0,539.2 1013.8,539.2 1013.8,541.0 1020.0,541.0 1020.0,542.8 1026.3,542.8 1026.3,544.6 1032.0,544.6 1032.0,546.0 1038.7,546.0 1038.7,547.7 1045.0,547.7 1045.0,549.6 1051.0,549.6 1051.0,551.6 1055.0,551.6 1055.0,553.1 1058.9,553.1 1058.9,553.4 1068.2,553.4 1068.2,553.9 1069.8,553.9 1069.8,555.5" fill="none" stroke="#0a8c8c" stroke-width="1.2" stroke-linejoin="miter"/>
<polyline points="77.6,743.9 77.6,671.3 78.0,673.0 91.8,673.0 91.8,674.1 94.5,674.1 94.5,674.9 98.6,674.9 98.6,676.3 106.8,676.3 106.8,677.3 113.6,677.3 113.6,678.2 115.2,678.2 117.0,676.9 118.8,678.2 119.0,678.2 119.0,679.0 127.2,679.0 127.2,680.0 135.4,680.0 135.4,681.7 142.2,681.7 142.2,683.1 147.7,683.1 147.7,684.4 151.7,684.4 151.7,686.3 157.2,686.3 157.2,688.2 166.7,688.2 166.7,689.9 172.2,689.9 172.2,691.2 181.7,691.2 181.7,693.1 192.6,693.1 192.6,695.0 204.9,695.0 204.9,696.4 217.1,696.4 217.1,697.8 241.7,697.8 241.7,699.4 268.9,699.4 268.9,701.3 298.9,701.3 298.9,703.2 331.6,703.2 331.6,704.6 383.0,704.6 383.0,706.4 490.2,706.4 492.0,708.0 493.8,706.4 506.7,706.4 508.5,708.0 510.3,706.4 517.0,706.4 517.0,707.8 613.0,707.8 613.0,709.2 656.0,709.2 656.0,711.3 695.0,711.3 695.0,709.2 715.0,709.2 715.0,707.8 730.0,707.8 730.0,706.4 792.0,706.4 792.0,707.8 826.7,707.8 828.5,706.3 830.3,707.8 890.0,707.8 890.0,709.2 932.0,709.2 932.0,711.3 947.0,711.3 947.0,712.5 950.9,712.5 950.9,714.0 954.8,714.0 954.8,714.4 960.3,714.4 960.3,715.5 964.1,715.5 964.1,717.0 968.0,717.0 968.0,717.5 974.0,717.5 974.0,719.0 979.7,719.0 979.7,720.2 985.0,720.2 985.0,722.2 991.0,722.2 991.0,723.4 996.8,723.4 996.8,724.5 1002.0,724.5 1002.0,726.0 1008.4,726.0 1008.4,727.6 1014.0,727.6 1014.0,729.5 1020.0,729.5 1020.0,731.5 1024.7,731.5 1024.7,733.0 1029.4,733.0 1029.4,733.5 1035.0,733.5 1035.0,735.2 1041.8,735.2 1041.8,736.9 1047.0,736.9 1047.0,738.5 1052.7,738.5 1052.7,740.0 1058.9,740.0 1058.9,742.4 1068.2,742.4 1068.2,742.4 1069.8,742.4 1069.8,743.9" fill="none" stroke="#8c0a48" stroke-width="1.2" stroke-linejoin="miter"/>
<polyline points="77.6,932.4 77.6,861.3 78.0,861.3 85.0,861.3 85.0,862.4 93.2,862.4 93.2,864.1 97.2,864.1 97.2,865.4 108.1,865.4 108.1,866.8 113.2,866.8 115.0,865.6 116.8,866.8 120.4,866.8 120.4,868.4 128.6,868.4 128.6,870.1 135.4,870.1 135.4,871.4 140.8,871.4 140.8,873.1 146.3,873.1 146.3,875.0 151.7,875.0 151.7,876.3 157.2,876.3 157.2,877.7 162.6,877.7 162.6,878.8 166.7,878.8 166.7,879.9 174.9,879.9 174.9,881.8 177.2,881.8 179.0,880.3 180.8,881.8 184.4,881.8 184.4,884.0 199.4,884.0 199.4,885.6 211.7,885.6 211.7,886.7 223.9,886.7 223.9,888.1 241.7,888.1 241.7,889.7 268.9,889.7 268.9,891.3 296.2,891.3 296.2,892.7 326.1,892.7 326.1,894.2 329.2,894.2 331.0,892.7 332.8,894.2 383.0,894.2 383.0,895.9 388.2,895.9 390.0,894.4 391.8,895.9 479.2,895.9 481.0,897.5 482.8,895.9 491.7,895.9 493.5,897.5 495.3,895.9 497.2,895.9 499.0,897.5 500.8,895.9 509.2,895.9 511.0,897.5 512.8,895.9 524.2,895.9 526.0,897.5 527.8,895.9 614.8,895.9 614.8,897.8 678.2,897.8 680.0,899.4 681.8,897.8 708.6,897.8 708.6,896.2 726.3,896.2 726.3,894.5 824.4,894.5 824.4,895.9 843.0,895.9 844.8,897.4 846.6,895.9 858.4,895.9 858.4,896.2 904.8,896.2 904.8,897.8 940.2,897.8 940.2,899.3 944.0,899.3 944.0,900.8 947.9,900.8 947.9,901.0 954.8,901.0 954.8,902.4 959.1,902.4 959.1,903.9 963.4,903.9 963.4,904.4 968.0,904.4 968.0,905.5 972.0,905.5 972.0,906.7 977.0,906.7 977.0,908.0 981.2,908.0 981.2,909.1 986.0,909.1 986.0,910.2 992.1,910.2 992.1,911.4 997.0,911.4 997.0,912.8 1003.0,912.8 1003.0,914.2 1008.0,914.2 1008.0,915.9 1013.9,915.9 1013.9,917.6 1020.0,917.6 1020.0,919.3 1026.3,919.3 1026.3,921.0 1032.0,921.0 1032.0,923.0 1038.7,923.0 1038.7,925.1 1043.0,925.1 1043.0,926.5 1048.0,926.5 1048.0,928.0 1051.9,928.0 1051.9,929.5 1055.8,929.5 1055.8,929.7 1062.0,929.7 1062.0,931.1 1069.8,931.1 1069.8,932.4" fill="none" stroke="#747412" stroke-width="1.2" stroke-linejoin="miter"/>
</svg>
<div class="ylab" style="color:#e00000;top:43.1px">116.0</div><div class="ylab" style="color:#e00000;top:213.9px">0.0</div><div class="chname" style="color:#e00000;top:130.8px"><span>LF_WSPD, km/h</span></div><div class="ylab" style="color:#00cc00;top:226.4px">116.0</div><div class="ylab" style="color:#00cc00;top:402.4px">0.0</div><div class="chname" style="color:#00cc00;top:316.8px"><span>LR_WSPD, km/h</span></div><div class="ylab" style="color:#00c4c4;top:415.1px">116.0</div><div class="ylab" style="color:#00c4c4;top:591.0px">0.0</div><div class="chname" style="color:#00c4c4;top:505.4px"><span>RF_WSPD, km/h</span></div><div class="ylab" style="color:#dc005c;top:603.9px">116.0</div><div class="ylab" style="color:#dc005c;top:779.6px">0.0</div><div class="chname" style="color:#dc005c;top:694.1px"><span>RR_WSPD, km/h</span></div><div class="ylab" style="color:#d4cc00;top:792.9px">120.0</div><div class="ylab" style="color:#d4cc00;top:968.4px">0.0</div><div class="chname" style="color:#d4cc00;top:883.0px"><span>VSS, km/h</span></div>
<div style="position:absolute;left:47.6px;top:975.8px;font-size:9.2px;line-height:9px;color:#dcdcdc;white-space:nowrap;transform:scaleX(0.86);transform-origin:left top">Time, m</div>
<div class="xlab" style="left:110.0px"><span>589.79</span></div>
<div class="xlab" style="left:159.7px"><span>590.78</span></div>
<div class="xlab" style="left:209.3px"><span>591.78</span></div>
<div class="xlab" style="left:259.0px"><span>592.75</span></div>
<div class="xlab" style="left:308.7px"><span>593.72</span></div>
<div class="xlab" style="left:358.4px"><span>594.72</span></div>
<div class="xlab" style="left:408.0px"><span>595.71</span></div>
<div class="xlab" style="left:457.7px"><span>596.68</span></div>
<div class="xlab" style="left:507.4px"><span>597.70</span></div>
<div class="xlab" style="left:557.0px"><span>598.66</span></div>
<div class="xlab" style="left:606.7px"><span>599.68</span></div>
<div class="xlab" style="left:656.4px"><span>600.70</span></div>
<div class="xlab" style="left:706.0px"><span>601.71</span></div>
<div class="xlab" style="left:755.7px"><span>602.76</span></div>
<div class="xlab" style="left:805.4px"><span>603.76</span></div>
<div class="xlab" style="left:855.1px"><span>604.73</span></div>
<div class="xlab" style="left:904.7px"><span>605.72</span></div>
<div class="xlab" style="left:954.4px"><span>606.72</span></div>
<div class="xlab" style="left:1004.1px"><span>607.74</span></div>
<div class="xlab" style="left:1053.7px"><span>608.77</span></div>
<div style="position:absolute;left:44px;top:984px;width:1057px;height:4.5px;background:#f0f0f0"></div>
<div style="position:absolute;left:42px;top:988px;width:11.5px;height:12px;background:#f0f0f0;border-right:1px solid #909090"></div>
<div style="position:absolute;left:54px;top:988px;width:11.5px;height:12px;background:#f0f0f0"></div>
<div style="position:absolute;left:65.5px;top:988.5px;width:1036px;height:11.5px;background:#f9f9f9;border-top:1.2px solid #a0a0a0;border-left:1.2px solid #a0a0a0"></div>
<svg width="30" height="12" style="position:absolute;left:40px;top:988px">
<path d="M6 6 L10 3.8 L10 8.2 Z" fill="#000"/>
<path d="M16 6.2 L20 3.8 L20 8.6 Z M21 6.2 L25 3.8 L25 8.6 Z" fill="#000"/>
</svg>
<div style="position:absolute;left:941.3px;top:989.5px;width:9.6px;height:8px;background:#ececec;border-right:1px solid #8c8c8c;border-bottom:1px solid #8c8c8c;border-left:1px solid #fff"></div>
<div style="position:absolute;left:945.5px;top:990px;width:1px;height:6px;background:#c8c8c8"></div>
</body></html>
